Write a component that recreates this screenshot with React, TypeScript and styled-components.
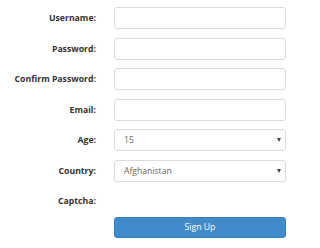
import React from 'react'
import styled, { createGlobalStyle } from 'styled-components'

const GlobalStyle = createGlobalStyle`
  html, body {
    margin: 0;
    padding: 0;
    background: #fff;
    width: 320px;
    height: 248px;
    overflow: hidden;
  }
  body {
    font-family: 'Open Sans', 'Liberation Sans', sans-serif;
    color: #333;
  }
`

const Form = styled.form`
  display: grid;
  grid-template-columns: 96px 172px;
  column-gap: 18px;
  row-gap: 8.6px;
  padding-top: 7px;
  align-items: center;
`

const Label = styled.label`
  font-size: 8.7px;
  font-weight: 700;
  text-align: right;
  color: #333;
`

const Field = styled.input`
  box-sizing: border-box;
  width: 100%;
  height: 22px;
  margin: 0;
  border: 1px solid #dcdcdc;
  border-radius: 3px;
  background: #fff;
  outline: none;
`

const SelectBox = styled.div`
  box-sizing: border-box;
  height: 22px;
  border: 1px solid #dcdcdc;
  border-radius: 3px;
  display: flex;
  align-items: center;
  justify-content: space-between;
  padding: 0 4px 0 9px;
  font-size: 8.6px;
  color: #666;
`

const Caret = styled.span`
  width: 0;
  height: 0;
  border-left: 2.5px solid transparent;
  border-right: 2.5px solid transparent;
  border-top: 4px solid #444;
`

const CaptchaRow = styled.div`
  height: 20px;
`

const Button = styled.button`
  grid-column: 2;
  box-sizing: border-box;
  height: 21px;
  margin-top: -2.6px;
  border: 1px solid #357ebd;
  border-radius: 3px;
  background: #428bca;
  color: #fff;
  font-family: 'Open Sans', 'Liberation Sans', sans-serif;
  font-size: 8.7px;
  padding: 0;
`

export default function App () {
  return (
    <>
      <GlobalStyle />
      <Form>
        <Label>Username:</Label>
        <Field type="text" />
        <Label>Password:</Label>
        <Field type="password" />
        <Label>Confirm Password:</Label>
        <Field type="password" />
        <Label>Email:</Label>
        <Field type="text" />
        <Label>Age:</Label>
        <SelectBox>
          <span>15</span>
          <Caret />
        </SelectBox>
        <Label>Country:</Label>
        <SelectBox>
          <span>Afghanistan</span>
          <Caret />
        </SelectBox>
        <Label>Captcha:</Label>
        <CaptchaRow />
        <Button type="button">Sign Up</Button>
      </Form>
    </>
  )
}
